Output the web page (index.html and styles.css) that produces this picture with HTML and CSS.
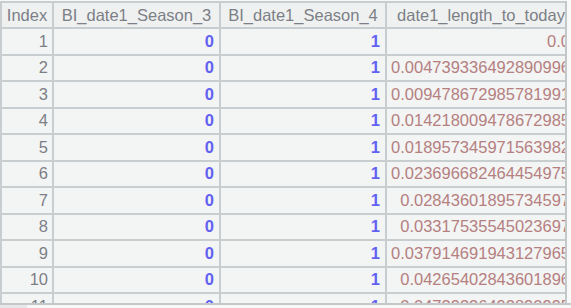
FILE: index.html
```html
<!DOCTYPE html>
<html>
<head>
<meta charset="utf-8">
<link rel="stylesheet" href="styles.css">
</head>
<body>
<div class="frame">
  <div class="viewport">
    <div class="row head">
      <div class="c c1">Index</div>
      <div class="c c2">BI_date1_Season_3</div>
      <div class="c c3">BI_date1_Season_4</div>
      <div class="c c4">date1_length_to_today</div>
    </div>
    <div class="row"><div class="c c1">1</div><div class="c c2 b">0</div><div class="c c3 b">1</div><div class="c c4 r">0.0</div></div>
    <div class="row"><div class="c c1">2</div><div class="c c2 b">0</div><div class="c c3 b">1</div><div class="c c4 r">0.004739336492890996</div></div>
    <div class="row"><div class="c c1">3</div><div class="c c2 b">0</div><div class="c c3 b">1</div><div class="c c4 r">0.009478672985781991</div></div>
    <div class="row"><div class="c c1">4</div><div class="c c2 b">0</div><div class="c c3 b">1</div><div class="c c4 r">0.014218009478672985</div></div>
    <div class="row"><div class="c c1">5</div><div class="c c2 b">0</div><div class="c c3 b">1</div><div class="c c4 r">0.018957345971563982</div></div>
    <div class="row"><div class="c c1">6</div><div class="c c2 b">0</div><div class="c c3 b">1</div><div class="c c4 r">0.023696682464454975</div></div>
    <div class="row"><div class="c c1">7</div><div class="c c2 b">0</div><div class="c c3 b">1</div><div class="c c4 r">0.02843601895734597</div></div>
    <div class="row"><div class="c c1">8</div><div class="c c2 b">0</div><div class="c c3 b">1</div><div class="c c4 r">0.03317535545023697</div></div>
    <div class="row"><div class="c c1">9</div><div class="c c2 b">0</div><div class="c c3 b">1</div><div class="c c4 r">0.037914691943127965</div></div>
    <div class="row"><div class="c c1">10</div><div class="c c2 b">0</div><div class="c c3 b">1</div><div class="c c4 r">0.04265402843601896</div></div>
    <div class="row"><div class="c c1">11</div><div class="c c2 b">0</div><div class="c c3 b">1</div><div class="c c4 r">0.04739336492890995</div></div>
  </div>
  <div class="vstrip"></div>
</div>
<div class="hbar"><div class="thumb"></div></div>
</body>
</html>
```
FILE: styles.css
```css
html, body {
  margin: 0;
  padding: 0;
  background: #f6f7f7;
}
body {
  width: 571px;
  height: 308px;
  overflow: hidden;
  font-family: "Liberation Sans", Arial, sans-serif;
  font-size: 16.5px;
}
.frame {
  display: flex;
  padding-top: 1px;
  height: 302px;
  border-bottom: 2px solid #c3c8cb;
}
.viewport {
  width: 565px;
  flex: none;
  overflow: hidden;
  border-right: 2px solid #c3c8cb;
  background: #f3f4f4;
}
.vstrip {
  flex: 1;
  background: #f8f9f9;
}
.row {
  display: grid;
  grid-template-columns: 54px 167px 166px 190px;
  height: 26.5px;
  width: 577px;
}
.row.head {
  height: 28px;
}
.c {
  box-sizing: border-box;
  border-right: 2px solid #c8cdd0;
  border-bottom: 2px solid #c8cdd0;
  display: flex;
  align-items: center;
  justify-content: flex-end;
  padding-right: 5px;
  white-space: nowrap;
  overflow: hidden;
  color: #7d7f86;
}
.c1 {
  border-left: 2px solid #c8cdd0;
  padding-right: 4px;
}
.head .c {
  border-top: 2px solid #c8cdd0;
  justify-content: center;
  padding-right: 0;
  color: #7c7f86;
  background: #eff1f1;
}
.c4.r {
  overflow: visible;
  justify-content: flex-end;
  padding-right: 5px;
}
.b {
  color: #6262f2;
  font-weight: bold;
}
.r {
  color: #b58080;
}
.hbar {
  height: 4px;
  background: #f7f8f8;
}
.thumb {
  width: 27px;
  height: 4px;
  background: #e6e8e9;
}
```
